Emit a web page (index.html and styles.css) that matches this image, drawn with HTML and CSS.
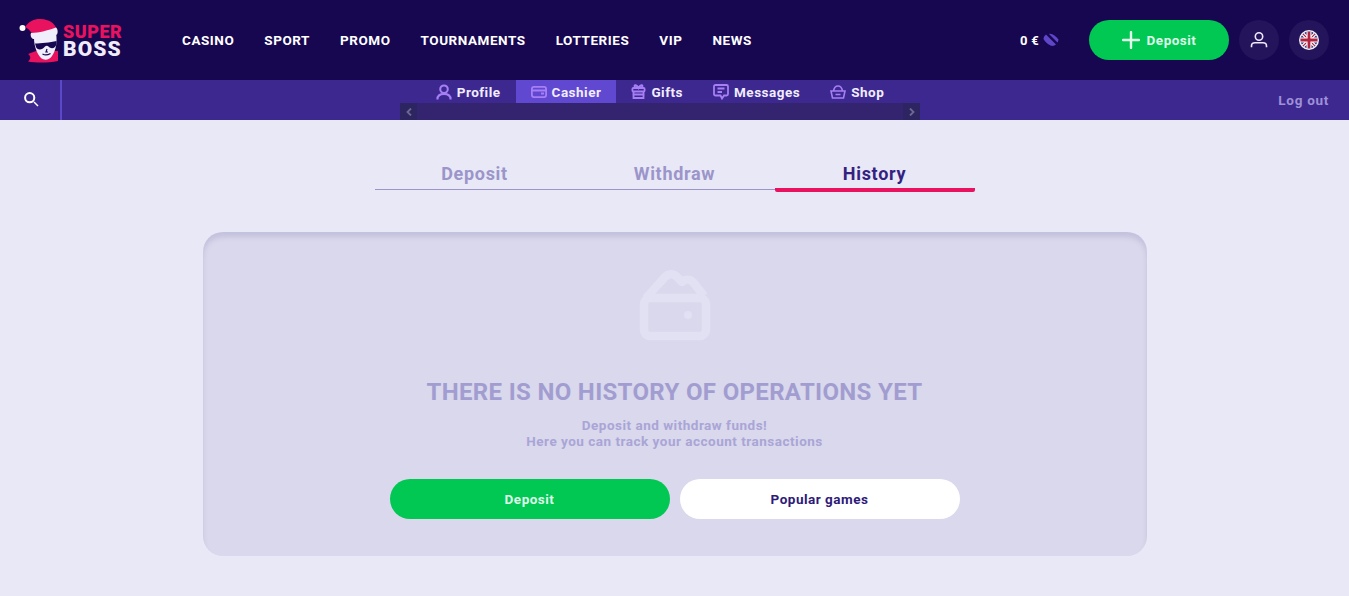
FILE: index.html
```html
<!DOCTYPE html>
<html lang="en">
<head>
<meta charset="utf-8">
<title>Super Boss</title>
<link rel="stylesheet" href="styles.css">
</head>
<body>
<header class="topbar">
  <a class="logo">
    <svg class="logo-mark" width="46" height="46" viewBox="18 16 46 46">
      <circle cx="22.500" cy="27" r="3" fill="#fff"/>
      <path d="M28 60.500C31 58 31 55 28 53L36 50L50 50L58 50V60C48 62 36 62 28 60.500Z" fill="#e8125f"/>
      <path d="M25 26C29 20 35 17.500 41 18C49 18.500 55 22 57 29L33 36C32 31 29 28 25 26Z" fill="#e8125f"/>
      <path d="M34 37C41 36 50 34 56 32C57.500 41 56 49 52 55C49 59.500 44 59.500 41 57C37 53 34 45 34 37Z" fill="#f1eefb"/>
      <path d="M31 32C39 32 49 29 56 26.500C58 28 58 32 57 33.500C49 36 40 38 33 38C31 37 30 34 31 32Z" fill="#f1eefb"/>
      <path d="M35 42.500C41 42.500 50 41.500 56.500 40V42.500C56 47.500 51 48.500 48.500 45.500C47.500 44.500 46 44.500 45 45.500C42 49.500 37 49 36 46Z" fill="#170650"/>
      <path d="M47 48L46 51H48M42.500 53C45 54.500 48 54 50.500 52.500" stroke="#170650" stroke-width="1.200" fill="none"/>
    </svg>
    <span class="logo-text">
      <span class="logo-super">SUPER</span>
      <span class="logo-boss">BOSS</span>
    </span>
  </a>
  <nav class="main-nav">
    <a>CASINO</a><a>SPORT</a><a>PROMO</a><a>TOURNAMENTS</a><a>LOTTERIES</a><a>VIP</a><a>NEWS</a>
  </nav>
  <div class="top-actions">
    <span class="balance">0 €
      <svg width="16" height="14" viewBox="0 0 16 14"><path d="M3 1.500L13 11.500C11.500 12.800 9.500 13.500 7.500 12.500C4.500 11 2 9 .5 6C.5 4.500 1.500 2.500 3 1.500Z" fill="#5f45c8"/><path d="M6 1C9 0 12.500 3 15.500 6.500C15.500 7.500 15 8.500 14.500 9.500Z" fill="#5f45c8"/></svg>
    </span>
    <button class="btn btn-green btn-top">
      <svg width="18" height="18" viewBox="0 0 18 18"><path d="M9 1V17M1 9H17" stroke="#e4fcec" stroke-width="2.400" stroke-linecap="round"/></svg>
      Deposit
    </button>
    <span class="round">
      <svg width="20" height="20" viewBox="0 0 20 20" fill="none" stroke="#eeeafc" stroke-width="1.600"><circle cx="10" cy="6.500" r="3.700"/><path d="M2.500 17.200V16C2.500 14 4 12.800 6 12.800H14C16 12.800 17.500 14 17.500 16V17.200"/></svg>
    </span>
    <span class="round">
      <svg width="20" height="20" viewBox="0 0 20 20">
        <defs><clipPath id="flag"><circle cx="10" cy="10" r="8.500"/></clipPath></defs>
        <circle cx="10" cy="10" r="10" fill="#f4f2fb"/>
        <g clip-path="url(#flag)">
          <rect width="20" height="20" fill="#2b2f73"/>
          <path d="M0 0L20 20M20 0L0 20" stroke="#fff" stroke-width="3.500"/>
          <path d="M0 0L20 20M20 0L0 20" stroke="#b3223f" stroke-width="1.200"/>
          <path d="M10 0V20M0 10H20" stroke="#fff" stroke-width="5"/>
          <path d="M10 0V20M0 10H20" stroke="#b3223f" stroke-width="2.800"/>
        </g>
      </svg>
    </span>
  </div>
</header>

<div class="subbar">
  <div class="search">
    <svg width="16" height="16" viewBox="0 0 16 16" fill="none" stroke="#fff"><circle cx="5.700" cy="5.700" r="4.600" stroke-width="2"/><path d="M10 10L14 14" stroke-width="1.500"/></svg>
  </div>
  <div class="sub-center">
    <div class="sub-scroller">
      <nav class="sub-nav">
        <a class="sub-item">
          <svg width="16" height="16" viewBox="0 0 17 17" fill="none" stroke="#a67ff5" stroke-width="2.200"><circle cx="8.500" cy="5.500" r="4"/><path d="M1.500 16.500C1.500 12.500 4 10.500 8.500 10.500S15.500 12.500 15.500 16.500"/></svg>
          Profile
        </a>
        <a class="sub-item is-active">
          <svg width="16" height="12" viewBox="0 0 16 12" fill="none" stroke="#a67ff5" stroke-width="1.800"><rect x=".9" y=".9" width="14.200" height="10.200" rx="2"/><path d="M1 4.500H15M10 7.500H13"/></svg>
          Cashier
        </a>
        <a class="sub-item">
          <svg width="15" height="15" viewBox="0 0 14 15" fill="none" stroke="#a67ff5" stroke-width="1.800"><rect x=".9" y="4" width="12.200" height="3.500" rx="1"/><path d="M2 7.500V14H12V7.500M1 10.500H13M7 4C4 4 3 3 3 2S5 0 7 4C9 0 11 1 11 2S10 4 7 4Z"/></svg>
          Gifts
        </a>
        <a class="sub-item">
          <svg width="16" height="16" viewBox="0 0 16 16" fill="none" stroke="#a67ff5" stroke-width="1.800"><path d="M2.500 1H13.500C14.400 1 15 1.600 15 2.500V10C15 10.900 14.400 11.500 13.500 11.500H11L9 14.500L7.500 11.500H2.500C1.600 11.500 1 10.900 1 10V2.500C1 1.600 1.600 1 2.500 1ZM4.500 4.500H11.500M4.500 8H9"/></svg>
          Messages
        </a>
        <a class="sub-item">
          <svg width="16" height="14" viewBox="0 0 16 14" fill="none" stroke="#a67ff5" stroke-width="1.600"><path d="M1 6H15L13.500 13H2.500ZM3.500 6C4 3 6 1 8 1S12 3 12.500 6M5.500 9.500H10.500"/></svg>
          Shop
        </a>
      </nav>
      <div class="sub-track">
        <span class="sub-arrow">
          <svg width="6" height="8" viewBox="0 0 6 8" fill="none" stroke="#6d6a8e" stroke-width="1.800"><path d="M5 .5L1.500 4L5 7.500"/></svg>
        </span>
        <span class="sub-arrow">
          <svg width="6" height="8" viewBox="0 0 6 8" fill="none" stroke="#6d6a8e" stroke-width="1.800"><path d="M1 .5L4.500 4L1 7.500"/></svg>
        </span>
      </div>
    </div>
  </div>
  <a class="logout">Log out</a>
</div>

<main class="page">
  <div class="tabs">
    <a class="tab">Deposit</a>
    <a class="tab">Withdraw</a>
    <a class="tab is-active">History</a>
  </div>
  <section class="panel">
    <svg class="wallet" width="74" height="74" viewBox="0 0 74 74" fill="none" stroke="#e2e1f3" stroke-width="8.500" stroke-linejoin="round">
      <rect x="6" y="29" width="62" height="38" rx="6"/>
      <path d="M8 29L27 8C30 5 35 4 38 7L44 13C47 10 52 10 55 13L66 27"/>
      <circle cx="50" cy="46" r="4" fill="#e2e1f3" stroke="none"/>
    </svg>
    <h1 class="panel-title">THERE IS NO HISTORY OF OPERATIONS YET</h1>
    <p class="panel-text">Deposit and withdraw funds!<br>Here you can track your account transactions</p>
    <div class="panel-actions">
      <button class="btn btn-green btn-wide">Deposit</button>
      <button class="btn btn-white btn-wide">Popular games</button>
    </div>
  </section>
</main>
</body>
</html>
```
FILE: styles.css
```css
* { box-sizing: border-box; }
html, body { margin: 0; height: 100%; }
body {
  background: #e8e8f7;
  font-family: "Roboto", "Liberation Sans", sans-serif;
  font-weight: 700;
  overflow: hidden;
}
a { text-decoration: none; color: inherit; }
button { font: inherit; border: 0; cursor: pointer; }

.topbar {
  height: 80px;
  background: #170650;
  display: flex;
  align-items: center;
  padding: 0 20px 0 18px;
}
.logo { display: flex; align-items: center; width: 164px; }
.logo-mark { display: block; margin-top: -1px; flex: none; }
.logo-text { display: flex; flex-direction: column; margin-left: -1px; margin-top: 1px; }
.logo-super { color: #e8125f; font-size: 18px; line-height: 17px; letter-spacing: .5px; font-weight: 900; }
.logo-boss { color: #efebfb; font-size: 21px; line-height: 18px; letter-spacing: 1.100px; font-weight: 900; }
.main-nav { display: flex; gap: 30px; color: #fff; font-size: 13.500px; letter-spacing: .55px; }
.top-actions { margin-left: auto; display: flex; align-items: center; gap: 10px; }
.balance { color: #fff; font-size: 13px; letter-spacing: .3px; display: flex; align-items: center; gap: 4px; margin-right: 20px; }

.btn { display: flex; align-items: center; justify-content: center; border-radius: 20px; height: 40px; font-size: 13.500px; letter-spacing: .5px; }
.btn-green { background: #00c853; color: #dffbe9; }
.btn-white { background: #fff; color: #2e1a78; }
.btn-top { width: 140px; gap: 7px; }
.btn-wide { width: 280px; }
.round { width: 40px; height: 40px; border-radius: 50%; background: #24145c; display: flex; align-items: center; justify-content: center; }

.subbar { height: 40px; background: #3d2890; display: flex; }
.search { width: 62px; border-right: 2px solid #5a48c8; display: flex; align-items: center; justify-content: center; padding-left: 4px; }
.sub-center { flex: 1; display: flex; justify-content: center; }
.sub-scroller { width: 520px; display: flex; flex-direction: column; }
.sub-nav { height: 23px; display: flex; justify-content: center; }
.sub-item { display: flex; align-items: center; gap: 5px; padding: 0 15px; color: #f1edff; font-size: 13.500px; letter-spacing: .5px; }
.is-active.sub-item { background: #6048d0; }
.sub-track { height: 17px; background: #34246f; display: flex; justify-content: space-between; }
.sub-arrow { width: 17px; background: #2c2562; display: flex; align-items: center; justify-content: center; }
.logout { width: 91px; padding: 0 20px; align-self: center; text-align: right; color: #9f91d8; font-size: 13.500px; letter-spacing: .7px; white-space: nowrap; }

.page { display: flex; flex-direction: column; align-items: center; padding-top: 41px; }
.tabs { width: 600px; display: flex; border-bottom: 1px solid #9c94c8; height: 29px; }
.tab { flex: 1; text-align: center; font-size: 18px; line-height: 25px; letter-spacing: .7px; color: #9b95c9; }
.tab.is-active { color: #34227f; height: 31px; border-bottom: 4px solid #e8125f; border-radius: 2px; }

.panel {
  width: 944px;
  height: 324px;
  margin-top: 42px;
  background: #d9d8ec;
  border-radius: 20px;
  box-shadow: inset 0 5px 5px rgba(120, 112, 170, .22);
  display: flex;
  flex-direction: column;
  align-items: center;
  padding-top: 37px;
}
.wallet { display: block; }
.panel-title { margin: 34px 0 0; font-size: 24px; line-height: 30px; letter-spacing: .33px; font-weight: 700; color: #a29dd0; }
.panel-text { margin: 10px 0 0; font-size: 13.500px; line-height: 16px; letter-spacing: .5px; color: #a9a5d6; text-align: center; }
.panel-actions { margin-top: 30px; display: flex; gap: 10px; }
```
